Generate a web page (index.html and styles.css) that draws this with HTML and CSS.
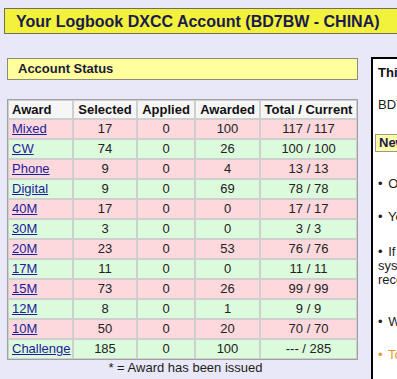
FILE: index.html
```html
<!DOCTYPE html>
<html lang="en">
<head>
<meta charset="utf-8">
<title>Your Logbook DXCC Account</title>
<link rel="stylesheet" href="styles.css">
</head>
<body>
<header class="title-bar">
  <h1 class="title">Your Logbook DXCC Account (BD7BW - CHINA)</h1>
</header>
<div class="main">
  <section class="status">
    <div class="status-bar">Account Status</div>
    <table class="awards">
      <colgroup>
        <col class="c-award"><col class="c-sel"><col class="c-app"><col class="c-awd"><col class="c-tot">
      </colgroup>
      <thead>
        <tr><th class="left">Award</th><th>Selected</th><th>Applied</th><th>Awarded</th><th>Total / Current</th></tr>
      </thead>
      <tbody>
        <tr class="pink"><td class="left"><a href="#">Mixed</a></td><td>17</td><td>0</td><td>100</td><td>117 / 117</td></tr>
        <tr class="green"><td class="left"><a href="#">CW</a></td><td>74</td><td>0</td><td>26</td><td>100 / 100</td></tr>
        <tr class="pink"><td class="left"><a href="#">Phone</a></td><td>9</td><td>0</td><td>4</td><td>13 / 13</td></tr>
        <tr class="green"><td class="left"><a href="#">Digital</a></td><td>9</td><td>0</td><td>69</td><td>78 / 78</td></tr>
        <tr class="pink"><td class="left"><a href="#">40M</a></td><td>17</td><td>0</td><td>0</td><td>17 / 17</td></tr>
        <tr class="green"><td class="left"><a href="#">30M</a></td><td>3</td><td>0</td><td>0</td><td>3 / 3</td></tr>
        <tr class="pink"><td class="left"><a href="#">20M</a></td><td>23</td><td>0</td><td>53</td><td>76 / 76</td></tr>
        <tr class="green"><td class="left"><a href="#">17M</a></td><td>11</td><td>0</td><td>0</td><td>11 / 11</td></tr>
        <tr class="pink"><td class="left"><a href="#">15M</a></td><td>73</td><td>0</td><td>26</td><td>99 / 99</td></tr>
        <tr class="green"><td class="left"><a href="#">12M</a></td><td>8</td><td>0</td><td>1</td><td>9 / 9</td></tr>
        <tr class="pink"><td class="left"><a href="#">10M</a></td><td>50</td><td>0</td><td>20</td><td>70 / 70</td></tr>
        <tr class="green"><td class="left"><a href="#">Challenge</a></td><td>185</td><td>0</td><td>100</td><td>--- / 285</td></tr>
      </tbody>
    </table>
    <p class="note">* = Award has been issued</p>
  </section>
  <aside class="info">
    <h2 class="info-title">Things you should know</h2>
    <p class="info-call">BD7BW account summary</p>
    <div class="notice">New Features</div>
    <p class="bullet">&bull; Only QSOs confirmed in LoTW are shown</p>
    <p class="bullet">&bull; You may select QSL cards for credit</p>
    <p class="bullet gap-lg">&bull; If your credits were awarded under the old<br>system, they are not included in these<br>records.</p>
    <p class="bullet">&bull; When you apply, fees are shown</p>
    <p class="bullet orange">&bull; To apply for an award, click here</p>
  </aside>
</div>
</body>
</html>
```

FILE: styles.css
```css
html, body {
  margin: 0;
  padding: 0;
}
body {
  background: #e8e8f8;
  font-family: "Liberation Sans", Arial, sans-serif;
  font-size: 13px;
  color: #1c1c1c;
  overflow: hidden;
  width: 397px;
  height: 379px;
}
.title-bar {
  margin: 8px -40px 0 4px;
  height: 24px;
  background: #f2f23c;
  border: 1px solid #6e6e5e;
  padding-left: 11px;
}
.title {
  margin: 0;
  font-size: 16px;
  line-height: 25px;
  font-weight: bold;
  color: #1a1a4e;
  white-space: nowrap;
}
.main {
  display: flex;
  gap: 13px;
  margin-top: 23px;
  padding-left: 7px;
}
.status {
  flex: 0 0 351px;
  padding-top: 1px;
}
.status-bar {
  height: 20px;
  line-height: 20px;
  background: #ffff9c;
  border: 1px solid #8c8c7c;
  padding-left: 10px;
  font-weight: bold;
  color: #1a1a3a;
}
.awards {
  margin-top: 19px;
  width: 351px;
  table-layout: fixed;
  border-collapse: separate;
  border-spacing: 0;
  border: 1px solid #a0a0a0;
}
.c-award { width: 65px; }
.c-sel { width: 64px; }
.c-app { width: 58px; }
.c-awd { width: 65px; }
.c-tot { width: 97px; }
.awards th,
.awards td {
  border: 1px solid #cfcfcf;
  padding: 0;
  text-align: center;
  white-space: nowrap;
  font-size: 13px;
}
.awards th {
  background: #f6f6f6;
  font-weight: bold;
  color: #111;
  line-height: 17px;
}
.awards td {
  line-height: 18px;
  color: #222;
}
.awards .left {
  text-align: left;
  padding-left: 3px;
}
.pink td { background: #fdd9dd; }
.green td { background: #dcfadc; }
.awards a {
  color: #1c1c9c;
  text-decoration: underline;
}
.note {
  margin: 0;
  line-height: 15px;
  text-align: center;
  padding-left: 6px;
  color: #1c1c1c;
}
.info {
  flex: 0 0 300px;
  min-height: 400px;
  background: #fff;
  border: 2px solid #000;
  padding: 6px 5px;
}
.info-title {
  margin: 0;
  font-size: 13px;
  line-height: 15px;
  font-weight: bold;
  color: #111;
  white-space: nowrap;
}
.info-call {
  margin: 17px 0 0;
  line-height: 15px;
  white-space: nowrap;
}
.notice {
  margin: 22px 0 0 -3px;
  height: 16px;
  line-height: 16px;
  background: #ffffaa;
  border: 1px solid #9a9a8a;
  padding-left: 3px;
  font-weight: bold;
  color: #1a1a4e;
  white-space: nowrap;
}
.bullet {
  margin: 0;
  line-height: 14px;
  white-space: nowrap;
  color: #1c1c1c;
  word-spacing: 2px;
}
.notice + .bullet { margin-top: 25px; }
.bullet + .bullet { margin-top: 19px; }
.bullet + .gap-lg { margin-top: 21px; }
.gap-lg + .bullet { margin-top: 28px; }
.orange { color: #e49a28; }
```
